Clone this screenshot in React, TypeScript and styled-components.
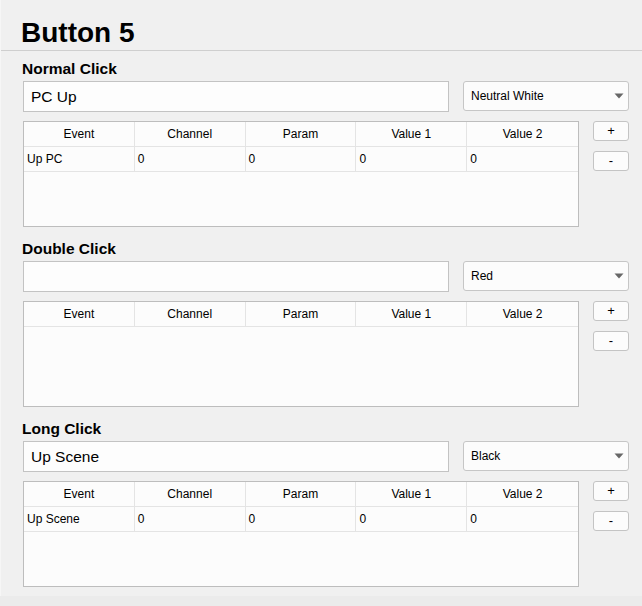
import React from "react";
import styled, { createGlobalStyle } from "styled-components";

const Global = createGlobalStyle`
  html, body { margin: 0; padding: 0; background: #ebebeb; }
  body { font-family: "Liberation Sans", Arial, sans-serif; color: #000; }
  * { box-sizing: border-box; }
`;

const Panel = styled.div`
  width: 642px;
  height: 596px;
  background: #f0f0f0;
  border-left: 1px solid #f6f6f6;
  display: flex;
  flex-direction: column;
`;

const Title = styled.h1`
  margin: 0;
  padding: 17px 0 1px 20px;
  font-size: 28px;
  line-height: 32px;
  font-weight: bold;
  border-bottom: 1px solid #cfcfcf;
`;

const Section = styled.section<{ $first?: boolean }>`
  display: flex;
  flex-direction: column;
  padding: 0 13px 0 22px;
  margin-top: ${(p) => (p.$first ? "9px" : "13px")};
`;

const Heading = styled.h2`
  margin: 0 0 3px -1px;
  font-size: 15.5px;
  line-height: 18px;
  font-weight: bold;
`;

const Row = styled.div`
  display: flex;
  gap: 14px;
`;

const TextField = styled.div`
  flex: 1;
  height: 31px;
  border: 1px solid #c3c3c3;
  background: #fdfdfd;
  padding-left: 7px;
  font-size: 15.5px;
  line-height: 29px;
`;

const SelectBox = styled.div`
  width: 166px;
  height: 30px;
  border: 1px solid #c6c6c6;
  border-radius: 3px;
  background: #fcfcfc;
  display: flex;
  align-items: center;
  justify-content: space-between;
  padding: 0 4px 0 7px;
  font-size: 12px;
`;

const TableRow = styled(Row)`
  margin-top: 9px;
`;

const TableBox = styled.div`
  flex: 1;
  height: 106px;
  border: 1px solid #bdbdbd;
  background: #fcfcfc;
`;

const GridRow = styled.div`
  display: grid;
  grid-template-columns: repeat(5, 1fr);
  height: 25px;
  border-bottom: 1px solid #e4e4e4;
`;

const Cell = styled.div<{ $head?: boolean }>`
  font-size: 12px;
  line-height: 24px;
  padding-left: ${(p) => (p.$head ? "0" : "3px")};
  text-align: ${(p) => (p.$head ? "center" : "left")};
  border-right: 1px solid #e4e4e4;
  white-space: nowrap;
  overflow: hidden;
  &:last-child { border-right: none; }
`;

const ButtonCol = styled.div`
  width: 36px;
  display: flex;
  flex-direction: column;
  gap: 10px;
`;

const SmallButton = styled.div`
  height: 20px;
  border: 1px solid #c4c4c4;
  border-radius: 3px;
  background: #fcfcfc;
  font-size: 13px;
  line-height: 18px;
  text-align: center;
`;

const Arrow = () => (
  <svg width="10" height="6" viewBox="0 0 10 6">
    <path d="M0.5 0.5 L9.5 0.5 L5 5.5 Z" fill="#676767" />
  </svg>
);

type SectionData = {
  title: string;
  name: string;
  color: string;
  rows: string[][];
};

const sections: SectionData[] = [
  { title: "Normal Click", name: "PC Up", color: "Neutral White", rows: [["Up PC", "0", "0", "0", "0"]] },
  { title: "Double Click", name: "", color: "Red", rows: [] },
  { title: "Long Click", name: "Up Scene", color: "Black", rows: [["Up Scene", "0", "0", "0", "0"]] },
];

const headers = ["Event", "Channel", "Param", "Value 1", "Value 2"];

export default function App() {
  return (
    <>
      <Global />
      <Panel>
        <Title>Button 5</Title>
        {sections.map((s, i) => (
          <Section key={s.title} $first={i === 0}>
            <Heading>{s.title}</Heading>
            <Row>
              <TextField>{s.name}</TextField>
              <SelectBox>
                <span>{s.color}</span>
                <Arrow />
              </SelectBox>
            </Row>
            <TableRow>
              <TableBox>
                <GridRow>
                  {headers.map((h) => (
                    <Cell $head key={h}>{h}</Cell>
                  ))}
                </GridRow>
                {s.rows.map((r, ri) => (
                  <GridRow key={ri}>
                    {r.map((c, ci) => (
                      <Cell key={ci}>{c}</Cell>
                    ))}
                  </GridRow>
                ))}
              </TableBox>
              <ButtonCol>
                <SmallButton>+</SmallButton>
                <SmallButton>-</SmallButton>
              </ButtonCol>
            </TableRow>
          </Section>
        ))}
      </Panel>
    </>
  );
}
